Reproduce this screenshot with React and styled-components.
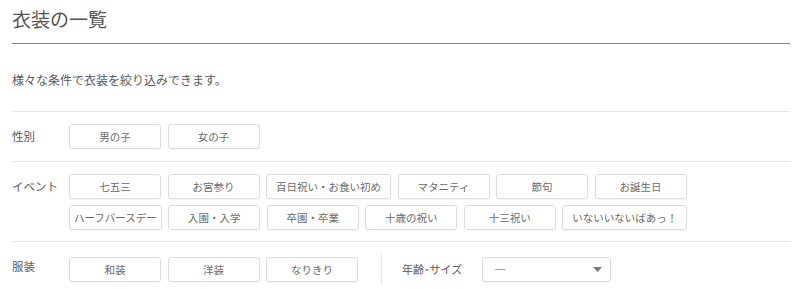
import React from "react";
import styled, { createGlobalStyle } from "styled-components";

const Global = createGlobalStyle`
  html, body { margin: 0; padding: 0; background: #fff; }
  body {
    font-family: "Noto Sans CJK JP", "Noto Sans", sans-serif;
    color: #555;
  }
`;

const Page = styled.div`
  padding: 0 10px 0 12px;
`;

const Title = styled.h2`
  margin: 0;
  padding: 5px 0 10px;
  font-size: 19px;
  line-height: 28px;
  font-weight: 400;
  color: #555;
  border-bottom: 1px solid #e95f4c;
`;

const Lead = styled.p`
  margin: 27px 0 22px;
  font-size: 12px;
  line-height: 18px;
  color: #5a5a5a;
`;

const Row = styled.div`
  display: flex;
  align-items: flex-start;
  border-top: 1px solid #e6e6e6;
  padding: 12px 0 ${(p) => p.$pb || "11px"};
`;

const Label = styled.div`
  flex: 0 0 57px;
  font-size: 11.5px;
  line-height: 25px;
  color: #5a5a5a;
`;

const Content = styled.div`
  display: flex;
  align-items: center;
`;

const Group = styled.div`
  display: flex;
  flex-wrap: wrap;
  column-gap: 6.5px;
  row-gap: 6px;
  width: ${(p) => p.$width || "auto"};
`;

const Chip = styled.button`
  box-sizing: border-box;
  min-width: 92px;
  height: 25px;
  padding: 0 ${(p) => (p.$compact ? "4px" : "9px")};
  border: 1px solid #dcdcdc;
  border-radius: 3px;
  background: #fff;
  box-shadow: 0 1px 1px rgba(0, 0, 0, 0.04);
  font-family: inherit;
  font-size: 10.5px;
  color: #6a6a6a;
  cursor: pointer;
  white-space: nowrap;
`;

const Divider = styled.div`
  width: 1px;
  height: 30px;
  background: #e6e6e6;
  margin: 0 20px 0 23px;
`;

const SubLabel = styled.div`
  font-size: 11px;
  color: #5a5a5a;
  margin-right: 20px;
  white-space: nowrap;
`;

const Select = styled.div`
  box-sizing: border-box;
  width: 129px;
  height: 25px;
  border: 1px solid #dcdcdc;
  border-radius: 3px;
  box-shadow: 0 1px 1px rgba(0, 0, 0, 0.04);
  display: flex;
  align-items: center;
  justify-content: space-between;
  padding: 0 8px 0 11px;
  font-size: 12px;
  color: #555;
`;

const gender = ["男の子", "女の子"];
const events = [
  "七五三",
  "お宮参り",
  "百日祝い・お食い初め",
  "マタニティ",
  "節句",
  "お誕生日",
  "ハーフバースデー",
  "入園・入学",
  "卒園・卒業",
  "十歳の祝い",
  "十三祝い",
  "いないいないばあっ！",
];
const wear = ["和装", "洋装", "なりきり"];

export default function App() {
  return (
    <Page>
      <Global />
      <Title>衣装の一覧</Title>
      <Lead>様々な条件で衣装を絞り込みできます。</Lead>
      <Row $pb="12px">
        <Label>性別</Label>
        <Group>
          {gender.map((t) => (
            <Chip key={t}>{t}</Chip>
          ))}
        </Group>
      </Row>
      <Row>
        <Label>イベント</Label>
        <Group $width="640px">
          {events.map((t) => (
            <Chip key={t} $compact={t === "ハーフバースデー"}>
              {t}
            </Chip>
          ))}
        </Group>
      </Row>
      <Row>
        <Label>服装</Label>
        <Content>
          <Group>
            {wear.map((t) => (
              <Chip key={t}>{t}</Chip>
            ))}
          </Group>
          <Divider />
          <SubLabel>年齢･サイズ</SubLabel>
          <Select>
            <span>―</span>
            <svg width="9" height="5" viewBox="0 0 9 5">
              <polygon points="0,0 9,0 4.5,5" fill="#777" />
            </svg>
          </Select>
        </Content>
      </Row>
    </Page>
  );
}
